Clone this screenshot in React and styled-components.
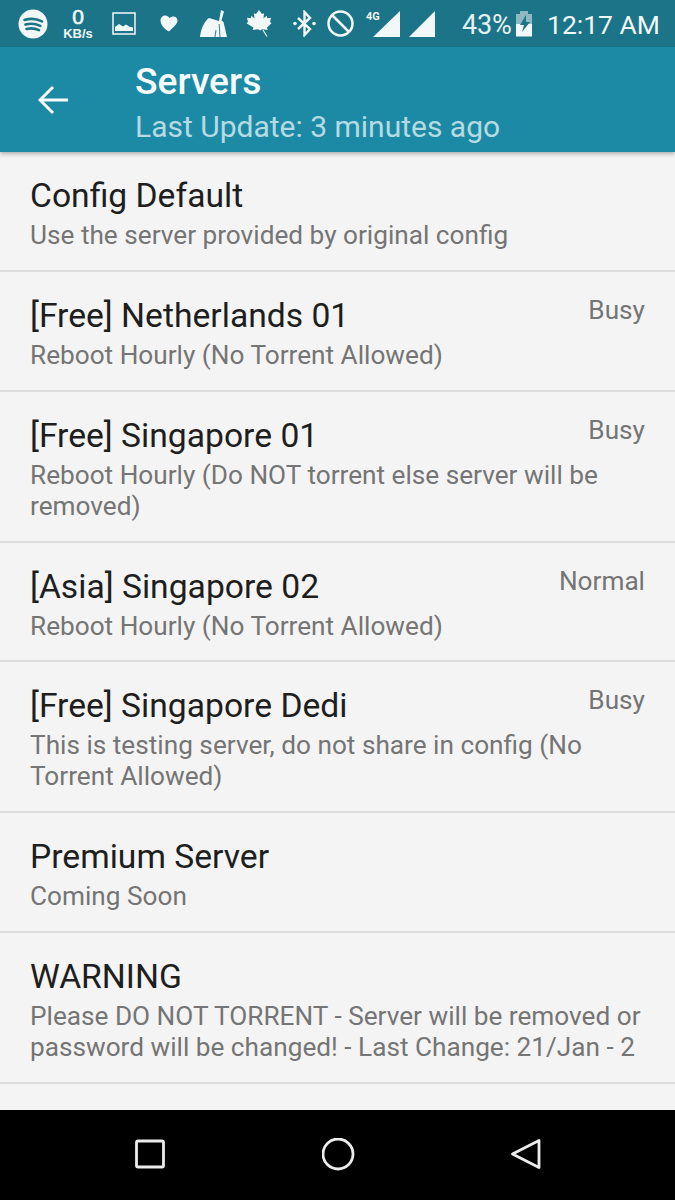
import React from "react";
import styled, { createGlobalStyle } from "styled-components";

const Global = createGlobalStyle`
  html, body { margin: 0; padding: 0; background: #f4f4f4; }
  body { font-family: Roboto, "Noto Sans", sans-serif; }
`;
const Screen = styled.div`
  width: 675px; height: 1200px; display: flex; flex-direction: column; overflow: hidden; background: #f4f4f4;
`;
const StatusBar = styled.div`
  height: 47px; flex: none; background: #1c7488; color: #f2f7f8; display: flex; align-items: center; padding: 0 15px 0 18px; box-sizing: border-box;
`;
const Slot = styled.div`
  flex: none; width: ${p => p.$w}px; margin-left: ${p => p.$ml || 0}px; display: flex; justify-content: center; align-items: center;
`;
const Speed = styled.div`
  flex: none; width: 32px; margin-left: 14px; display: flex; flex-direction: column; align-items: center; gap: 2px; font-family: "Liberation Sans", sans-serif; font-weight: 700; line-height: 1;
`;
const SpeedValue = styled.span` font-size: 21px; height: 19px; line-height: 19px; font-weight: 400; -webkit-text-stroke: .6px #f2f7f8; `;
const SpeedUnit = styled.span` font-size: 13px; height: 12px; line-height: 12px; white-space: nowrap; `;
const Percent = styled.span` margin-left: 27px; padding-top: 3px; font-size: 27px; letter-spacing: -.2px; color: #e6f0f2; `;
const Clock = styled.span` margin-left: auto; font-size: 26.500px; font-weight: 400; white-space: nowrap; padding-top: 2px; `;
const AppBar = styled.header`
  height: 105px; flex: none; background: #1d8aa5; display: flex; align-items: flex-start; position: relative; box-shadow: 0 2px 4px rgba(0,0,0,.28); z-index: 1;
`;
const Back = styled.div` width: 135px; height: 105px; flex: none; display: flex; padding: 38px 0 0 38px; box-sizing: border-box; `;
const Titles = styled.div` display: flex; flex-direction: column; padding-top: 13px; `;
const Title = styled.div` font-size: 37.200px; font-weight: 500; color: #f6fbfc; line-height: 43px; `;
const Subtitle = styled.div` font-size: 30px; font-weight: 400; color: #b5dae3; line-height: 47px; white-space: nowrap; `;
const List = styled.main` flex: 1; overflow: hidden; `;
const Row = styled.div`
  border-bottom: 2px solid #dcdcdc; padding: 23px 30px 18.850px; display: flex; flex-direction: column; gap: 3px;
`;
const RowHead = styled.div` display: flex; justify-content: space-between; align-items: flex-start; gap: 12px; `;
const RowTitle = styled.div` font-size: 33.650px; line-height: 42px; color: #1e1e1e; white-space: nowrap; `;
const RowSub = styled.div` font-size: 26.200px; line-height: 31px; color: #757575; `;
const Load = styled.div` font-size: 26.200px; line-height: 31px; color: #757575; white-space: nowrap; `;
const NavBar = styled.nav`
  height: 90px; flex: none; background: #000; display: flex; padding-left: 135px; box-sizing: border-box; align-items: flex-start;
`;
const NavSlot = styled.div` width: ${p => p.$w}px; flex: none; padding-top: 28px; `;

const Icon = ({ w, h, children, ...rest }) => (
  <svg width={w} height={h} viewBox={`0 0 ${w} ${h}`} fill="none" {...rest}>{children}</svg>
);

const servers = [
  { t: "Config Default", s: "Use the server provided by original config" },
  { t: "[Free] Netherlands 01", s: "Reboot Hourly (No Torrent Allowed)", l: "Busy" },
  { t: "[Free] Singapore 01", s: "Reboot Hourly (Do NOT torrent else server will be removed)", l: "Busy" },
  { t: "[Asia] Singapore 02", s: "Reboot Hourly (No Torrent Allowed)", l: "Normal" },
  { t: "[Free] Singapore Dedi", s: "This is testing server, do not share in config (No Torrent Allowed)", l: "Busy" },
  { t: "Premium Server", s: "Coming Soon" },
  { t: "WARNING", s: "Please DO NOT TORRENT - Server will be removed or password will be changed! - Last Change: 21/Jan - 2" },
];

export default function App() {
  const c = "#f2f7f8";
  return (
    <Screen>
      <Global />
      <StatusBar>
        <Icon w={30} h={30}>
          <circle cx="15" cy="15" r="14.500" fill={c} />
          <path d="M6.500 11c6-1.800 12-1.300 17.500 1.400M7.500 15.600c5-1.400 10-1 14.800 1.300M8.500 20c4.200-1.100 8.500-.8 12.500 1.100" stroke="#1c7488" strokeWidth="2.600" strokeLinecap="round" />
        </Icon>
        <Speed>
          <SpeedValue>0</SpeedValue>
          <SpeedUnit>KB/s</SpeedUnit>
        </Speed>
        <Slot $w={24} $ml={18}>
          <Icon w={24} h={23}>
            <rect x="1" y="1" width="22" height="21" stroke={c} strokeWidth="1.500" />
            <path d="M3 19v-4l4-3 4 2.500 3-2 3 2 4 1v3.500z" fill={c} />
          </Icon>
        </Slot>
        <Slot $w={18} $ml={24}>
          <Icon w={18} h={17}>
            <path d="M9 16.500C4 14 .5 9.500.5 5.500.5 2.500 2.700.5 5.200.5 7 .5 8.500 1.500 9.500 3 10.500 2 12 1.500 13.500 1.500c2.400 0 4 1.700 4 4 0 2.500-2 4.500-4 6.500-1.700 1.500-3 3-4.500 4.500z" fill={c} />
          </Icon>
        </Slot>
        <Slot $w={27} $ml={22}>
          <Icon w={27} h={27}>
            <path d="M21 0l3 1.500-2.500 9 2 1.500 3.500 15H0c.5-5 2-10 4-13 1-2 3-5 5-6l10 3z" fill={c} />
            <path d="M20 27l-.8-13M15 27l1-7" stroke="#1c7488" strokeWidth=".9" />
          </Icon>
        </Slot>
        <Slot $w={26} $ml={19}>
          <Icon w={26} h={27}>
            <path d="M13 0l3 4 2-.8-.5 5.300 3-2.700 1 2.500 3.500-.6-1 4.300 1.500 1.200-4.500 4.300.7 2.500-5.500-.8-2 1.300-2-1.300-5.500.8.7-2.500L.5 13.200l1.500-1.200-1-4.300 3.500.6 1-2.500 3 2.700-.5-5.300 2 .8z" fill={c} />
            <path d="M17 20l4 6.500" stroke={c} strokeWidth="1.200" />
          </Icon>
        </Slot>
        <Slot $w={23} $ml={21}>
          <Icon w={23} h={27}>
            <path d="M5 8l12 11-5.500 6V2L17 8 5 19" stroke={c} strokeWidth="2.400" />
            <circle cx="2" cy="13.500" r="1.800" fill={c} /><circle cx="21" cy="13.500" r="1.800" fill={c} />
          </Icon>
        </Slot>
        <Slot $w={27} $ml={11}>
          <Icon w={27} h={27}>
            <circle cx="13.500" cy="13.500" r="12" stroke={c} strokeWidth="2.500" />
            <path d="M5 5l17 17" stroke={c} strokeWidth="2.500" />
          </Icon>
        </Slot>
        <Slot $w={34} $ml={12}>
          <Icon w={34} h={28}>
            <text x="0" y="9.500" fill={c} fontFamily="Roboto, sans-serif" fontSize="11" fontWeight="700">4G</text>
            <path d="M34 1v26H7z" fill={c} />
          </Icon>
        </Slot>
        <Slot $w={26} $ml={9}>
          <Icon w={26} h={28}>
            <path d="M26 1v26H0z" fill={c} />
          </Icon>
        </Slot>
        <Percent>43%</Percent>
        <Slot $w={18} $ml={3}>
          <Icon w={18} h={27}>
            <path d="M5 1h8v3h4v10H1V4h4z" fill="#8fb8c2" />
            <path d="M1 14h16v12.500H1z" fill={c} />
            <path d="M11 5L5 15h4l-2 7 8-10h-4z" fill="#1c7488" />
          </Icon>
        </Slot>
        <Clock>12:17 AM</Clock>
      </StatusBar>
      <AppBar>
        <Back>
          <Icon w={32} h={32}>
            <path d="M30 15H3M15 2L2 15l13 13" stroke="#f6fbfc" strokeWidth="3" />
          </Icon>
        </Back>
        <Titles>
          <Title>Servers</Title>
          <Subtitle>Last Update: 3 minutes ago</Subtitle>
        </Titles>
      </AppBar>
      <List>
        {servers.map(r => (
          <Row key={r.t}>
            <RowHead>
              <RowTitle>{r.t}</RowTitle>
              {r.l && <Load>{r.l}</Load>}
            </RowHead>
            <RowSub>{r.s}</RowSub>
          </Row>
        ))}
      </List>
      <NavBar>
        <NavSlot $w={187}>
          <Icon w={30} h={34}>
            <rect x="1.500" y="3" width="27" height="26" rx="1.500" stroke="#ececec" strokeWidth="2.800" />
          </Icon>
        </NavSlot>
        <NavSlot $w={188}>
          <Icon w={34} h={34}>
            <circle cx="16" cy="16" r="15" stroke="#ececec" strokeWidth="2.800" />
          </Icon>
        </NavSlot>
        <NavSlot $w={40}>
          <Icon w={32} h={34}>
            <path d="M29 2.500v27L2.500 16z" stroke="#ececec" strokeWidth="2.800" strokeLinejoin="round" />
          </Icon>
        </NavSlot>
      </NavBar>
    </Screen>
  );
}
